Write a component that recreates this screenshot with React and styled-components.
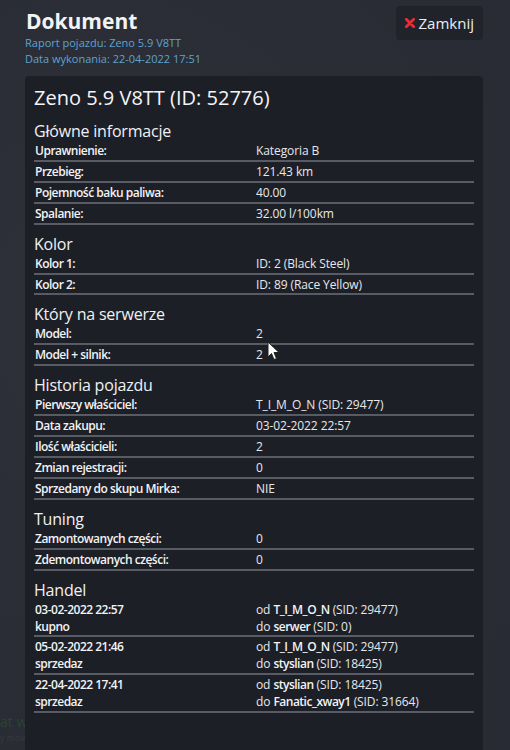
import React from 'react';
import styled, { createGlobalStyle } from 'styled-components';

const GlobalStyle = createGlobalStyle`
  html, body {
    margin: 0;
    padding: 0;
    background: #2a2d35;
  }
  body {
    font-family: "Open Sans", "DejaVu Sans", sans-serif;
    color: #eceef2;
  }
`;

const sections = [
  {
    title: 'Główne informacje',
    rows: [
      ['Uprawnienie:', 'Kategoria B'],
      ['Przebieg:', '121.43 km'],
      ['Pojemność baku paliwa:', '40.00'],
      ['Spalanie:', '32.00 l/100km'],
    ],
  },
  {
    title: 'Kolor',
    rows: [
      ['Kolor 1:', 'ID: 2 (Black Steel)'],
      ['Kolor 2:', 'ID: 89 (Race Yellow)'],
    ],
  },
  {
    title: 'Który na serwerze',
    rows: [
      ['Model:', '2'],
      ['Model + silnik:', '2'],
    ],
  },
  {
    title: 'Historia pojazdu',
    rows: [
      ['Pierwszy właściciel:', 'T_I_M_O_N (SID: 29477)'],
      ['Data zakupu:', '03-02-2022 22:57'],
      ['Ilość właścicieli:', '2'],
      ['Zmian rejestracji:', '0'],
      ['Sprzedany do skupu Mirka:', 'NIE'],
    ],
  },
  {
    title: 'Tuning',
    rows: [
      ['Zamontowanych części:', '0'],
      ['Zdemontowanych części:', '0'],
    ],
  },
];

const trades = [
  { date: '03-02-2022 22:57', type: 'kupno', from: ['T_I_M_O_N', 29477], to: ['serwer', 0] },
  { date: '05-02-2022 21:46', type: 'sprzedaz', from: ['T_I_M_O_N', 29477], to: ['styslian', 18425] },
  { date: '22-04-2022 17:41', type: 'sprzedaz', from: ['styslian', 18425], to: ['Fanatic_xway1', 31664] },
];

const Page = styled.div`
  position: relative;
  min-height: 750px;
  box-sizing: border-box;
  padding: 6px 27px 0 25px;
  overflow: hidden;
  background: radial-gradient(ellipse at 20% 40%, #2e313a 0%, #2a2d35 50%, #282b33 100%);
`;

const BackdropText = styled.div`
  position: absolute;
  left: 0;
  top: 713px;
  z-index: 0;
  color: #2b4431;

  span {
    display: block;
    font-size: 14px;
    line-height: 17px;
  }

  small {
    display: block;
    margin-top: 2px;
    font-size: 9px;
    line-height: 11px;
    color: #373a42;
  }
`;

const Header = styled.header`
  position: relative;
  z-index: 1;
  display: flex;
  justify-content: space-between;
  align-items: flex-start;
`;

const Heading = styled.div`
  padding-top: 1px;
`;

const Title = styled.h1`
  margin: 0;
  font-size: 21px;
  line-height: 28px;
  font-weight: 700;
  color: #f2f3f5;
  padding-left: 1px;
`;

const Sub = styled.div`
  font-size: 11px;
  line-height: 16px;
  color: #5fa2d2;
`;

const CloseButton = styled.button`
  display: flex;
  align-items: center;
  gap: 4px;
  height: 34px;
  padding: 0 9px 0 9px;
  border: none;
  border-radius: 4px;
  background: #21232b;
  color: #eceef2;
  font-family: inherit;
  font-size: 15px;
  cursor: pointer;
`;

const Panel = styled.main`
  position: relative;
  z-index: 1;
  margin-top: 9px;
  min-height: 680px;
  padding: 8px 9px 20px;
  border-radius: 4px 4px 0 0;
  background: rgba(28, 30, 38, 0.93);
`;

const VehicleName = styled.h2`
  margin: 0 0 4px;
  font-size: 20px;
  line-height: 28px;
  font-weight: 400;
  color: #f4f5f7;
`;

const SectionTitle = styled.h3`
  margin: 9px 0 0;
  font-size: 16px;
  line-height: 20px;
  font-weight: 400;
  color: #f0f1f3;
  letter-spacing: -0.2px;
`;

const Row = styled.div`
  display: grid;
  grid-template-columns: 1fr 1fr;
  padding-top: 2px;
  border-bottom: 2px solid #595b64;
  font-size: 12px;
  line-height: 16.9px;
`;

const Label = styled.div`
  padding-left: 1px;
  font-weight: 600;
  letter-spacing: -0.5px;
  color: #f2f3f5;
`;

const Value = styled.div`
  padding-left: 2px;
  color: #e6e8ec;
  letter-spacing: -0.1px;

  b {
    font-weight: 600;
    letter-spacing: -0.5px;
    color: #f2f3f5;
  }
`;

const Cursor = styled.svg`
  position: absolute;
  left: 242px;
  top: 265px;
  z-index: 2;
`;

const Party = ({ dir, name, sid }) => (
  <div>
    {dir} <b>{name}</b> (SID: {sid})
  </div>
);

export default function App() {
  return (
    <>
      <GlobalStyle />
      <Page>
        <BackdropText>
          <span>at włączony</span>
          <small>y mówić</small>
        </BackdropText>
        <Header>
          <Heading>
            <Title>Dokument</Title>
            <Sub>Raport pojazdu: Zeno 5.9 V8TT</Sub>
            <Sub>Data wykonania: 22-04-2022 17:51</Sub>
          </Heading>
          <CloseButton>
            <svg width="10" height="10" viewBox="0 0 10 10">
              <path d="M1.3 1.3 L8.7 8.7 M8.7 1.3 L1.3 8.7" stroke="#ec2b35" strokeWidth="2.8" strokeLinecap="round" />
            </svg>
            Zamknij
          </CloseButton>
        </Header>
        <Panel>
          <VehicleName>Zeno 5.9 V8TT (ID: 52776)</VehicleName>
          {sections.map((s) => (
            <section key={s.title}>
              <SectionTitle>{s.title}</SectionTitle>
              {s.rows.map(([k, v]) => (
                <Row key={k}>
                  <Label>{k}</Label>
                  <Value>{v}</Value>
                </Row>
              ))}
            </section>
          ))}
          <section>
            <SectionTitle>Handel</SectionTitle>
            {trades.map((t) => (
              <Row key={t.date}>
                <Label>
                  <div>{t.date}</div>
                  <div>{t.type}</div>
                </Label>
                <Value>
                  <Party dir="od" name={t.from[0]} sid={t.from[1]} />
                  <Party dir="do" name={t.to[0]} sid={t.to[1]} />
                </Value>
              </Row>
            ))}
          </section>
          <Cursor width="14" height="20" viewBox="0 0 14 20">
            <path d="M1 1 L1 16 L4.5 12.5 L7 18.5 L9.5 17.5 L7 11.5 L12 11.5 Z" fill="#ffffff" stroke="#222" strokeWidth="1" strokeLinejoin="round" />
          </Cursor>
        </Panel>
      </Page>
    </>
  );
}
